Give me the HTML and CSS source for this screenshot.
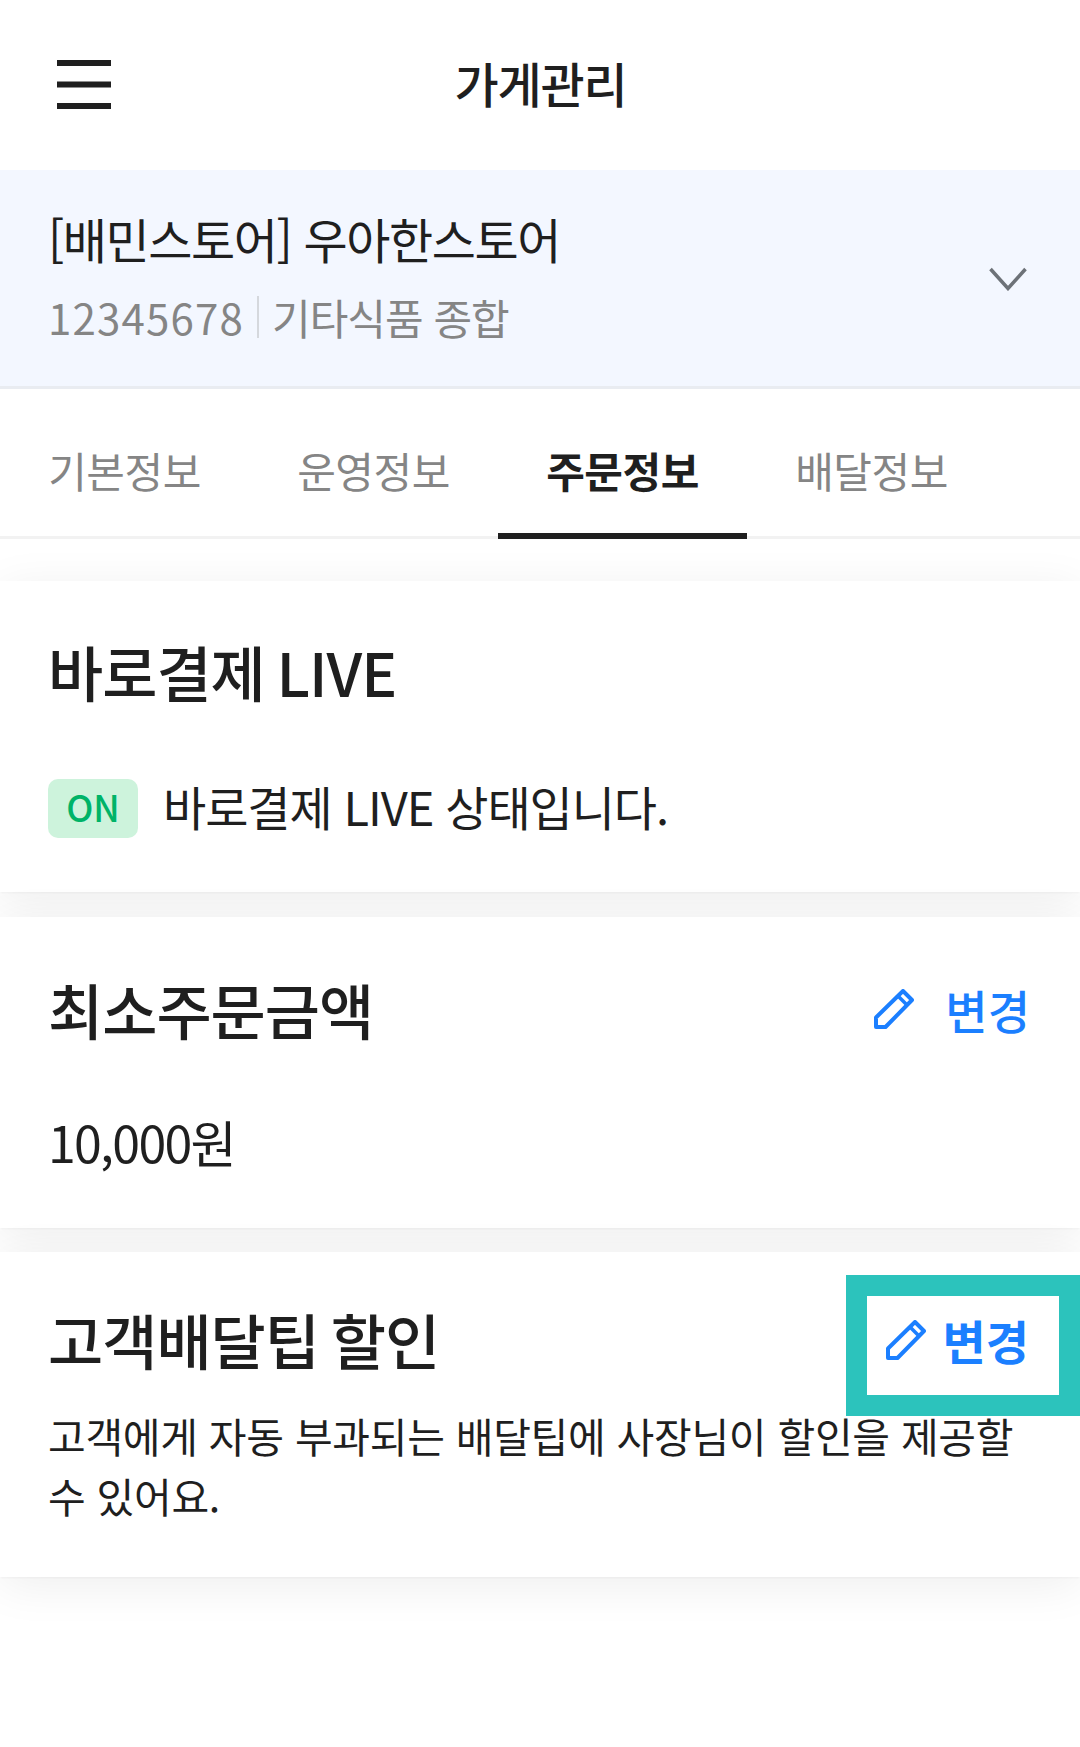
FILE: index.html
```html
<!DOCTYPE html>
<html lang="ko">
<head>
<meta charset="utf-8">
<title>가게관리</title>
<link rel="stylesheet" href="styles.css">
</head>
<body>
<div class="page">
  <header class="topbar">
    <svg class="menu-icon" width="54" height="49" viewBox="0 0 54 49"><path d="M0 3H54M0 24.500H54M0 46H54" stroke="#1f1f1f" stroke-width="6" fill="none"/></svg>
    <h1 class="topbar-title">가게관리</h1>
    <span></span>
  </header>
  <section class="store">
    <div class="store-info">
      <div class="store-name">[배민스토어] 우아한스토어</div>
      <div class="store-meta"><span class="store-no">12345678</span><i class="store-sep"></i><span>기타식품 종합</span></div>
    </div>
    <svg class="chevron" width="38" height="24" viewBox="0 0 38 24"><path d="M1.5 2L19 21.5L36.5 2" stroke="#6d7278" stroke-width="3.5" fill="none"/></svg>
  </section>
  <nav class="tabs">
    <a class="tab">기본정보</a>
    <a class="tab">운영정보</a>
    <a class="tab tab-active">주문정보</a>
    <a class="tab">배달정보</a>
  </nav>
  <main class="cards">
    <section class="card card-live">
      <h2 class="card-title">바로결제 LIVE</h2>
      <div class="live-row"><span class="badge">ON</span><span class="body-text">바로결제 LIVE 상태입니다.</span></div>
    </section>
    <section class="card card-min">
      <div class="card-head">
        <h2 class="card-title">최소주문금액</h2>
        <a class="change">
          <svg width="40" height="40" viewBox="0 0 40 40"><path d="M2 28.5L29 2L38 11L11.5 38H2Z" stroke="#1b7fff" stroke-width="4" stroke-linejoin="round" fill="none"/><path d="M25 8L32 15" stroke="#1b7fff" stroke-width="3.500" fill="none"/></svg>
          <span>변경</span>
        </a>
      </div>
      <div class="body-text amount">10,000원</div>
    </section>
    <section class="card card-tip">
      <div class="card-head">
        <h2 class="card-title">고객배달팁 할인</h2>
      </div>
      <p class="body-text tip-desc">고객에게 자동 부과되는 배달팁에 사장님이 할인을 제공할 수 있어요.</p>
      <div class="highlight">
        <a class="change change-strong">
          <svg width="40" height="40" viewBox="0 0 40 40"><path d="M2 28.5L29 2L38 11L11.5 38H2Z" stroke="#1b7fff" stroke-width="4" stroke-linejoin="round" fill="none"/><path d="M25 8L32 15" stroke="#1b7fff" stroke-width="3.500" fill="none"/></svg>
          <span>변경</span>
        </a>
      </div>
    </section>
  </main>
</div>
</body>
</html>
```
FILE: styles.css
```css
* { box-sizing: border-box; }
html, body { margin: 0; padding: 0; }
body {
  width: 1080px;
  height: 1747px;
  overflow: hidden;
  background: #fff;
  color: #1f1f1f;
  font-family: "Noto Sans CJK KR", "Noto Sans", sans-serif;
}
h1, h2, p { margin: 0; font: inherit; }
.page { width: 1080px; }

.topbar {
  height: 170px;
  display: grid;
  grid-template-columns: 1fr auto 1fr;
  align-items: center;
  padding: 0 0 0 57px;
}
.menu-icon { display: block; margin-top: -1px; }
.topbar-title {
  font-size: 48px;
  font-weight: 500;
  line-height: 60px;
  letter-spacing: -1.1px;
  transform: translate(-28px, -3px);
}

.store {
  height: 219px;
  background: #f3f7ff;
  border-bottom: 3px solid #e9ecf1;
  display: flex;
  align-items: center;
  justify-content: space-between;
  padding: 0 53px 0 48px;
}
.store-info { display: flex; flex-direction: column; gap: 17px; margin-top: -3px; }
.store-name { font-size: 48px; line-height: 64px; letter-spacing: -1.4px; font-weight: 400; }
.store-meta {
  display: flex;
  align-items: center;
  font-size: 42px;
  line-height: 60px;
  color: #858585;
  letter-spacing: -1px;
}
.store-no { letter-spacing: 1.2px; }
.store-sep { width: 2px; height: 42px; background: #d5d8dd; margin: 0 13px 0 13px; }
.chevron { display: block; margin-top: 2px; }

.tabs {
  height: 150px;
  display: grid;
  grid-template-columns: repeat(4, 249px);
  border-bottom: 3px solid #f2f2f2;
}
.tab {
  display: flex;
  align-items: center;
  justify-content: center;
  font-size: 42px;
  color: #858585;
  letter-spacing: -0.5px;
  height: 150px;
  padding-top: 10px;
}
.tab-active {
  color: #1f1f1f;
  font-weight: 700;
  border-bottom: 6px solid #1f1f1f;
  padding-top: 16px;
}

.cards { padding-top: 42px; display: flex; flex-direction: column; gap: 24.5px; }
.card {
  background: #fff;
  padding: 0 48px;
  box-shadow: 0 8px 44px rgba(0, 0, 0, .07), 0 2px 2px -1px rgba(0, 0, 0, .04);
  position: relative;
}
.card-live { height: 311px; padding-top: 50px; }
.card-min { height: 311px; padding-top: 52px; }
.card-tip { height: 325px; padding-top: 47px; }
.card-head { display: flex; justify-content: space-between; align-items: center; }
.card-title { font-size: 60px; line-height: 80px; font-weight: 500; letter-spacing: -1px; word-spacing: -4px; }
.body-text { font-size: 47px; line-height: 60px; letter-spacing: -1.1px; }
.live-row { display: flex; align-items: center; gap: 25px; margin-top: 68px; }
.live-row .body-text { margin-top: -6px; }
.badge {
  width: 90px;
  height: 59px;
  border-radius: 10px;
  background: #cdf3dc;
  color: #00b368;
  font-size: 36px;
  font-weight: 500;
  display: flex;
  align-items: center;
  justify-content: center;
  padding-bottom: 6px;
}
.change {
  display: flex;
  align-items: center;
  gap: 31px;
  color: #1b7fff;
  font-size: 46px;
  font-weight: 500;
  line-height: 60px;
  letter-spacing: 0;
  margin-right: 2px;
}
.change svg { display: block; }
.amount { margin-top: 62px; font-size: 50px; letter-spacing: -1.7px; }
.tip-desc { font-size: 41px; margin-top: 26px; width: 984px; letter-spacing: -0.3px; }
.highlight {
  position: absolute;
  top: 23px;
  right: 0;
  width: 234px;
  height: 141px;
  border: 21px solid #2cc3bc;
  background: #fff;
  display: flex;
  align-items: center;
  justify-content: flex-end;
}
.change-strong { gap: 17px; font-weight: 700; font-size: 47px; margin-right: 0; transform: translate(-30px, -6px); }
```
